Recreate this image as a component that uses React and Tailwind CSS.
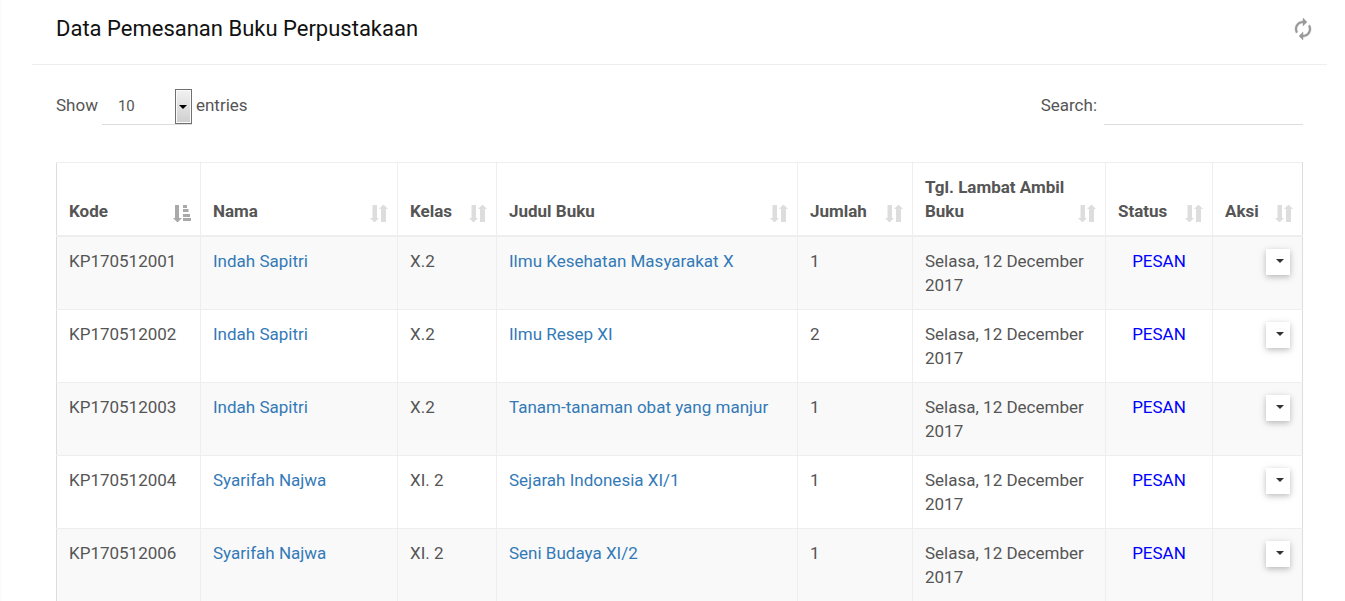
import { useState } from "react";

const columns = [
  { label: "Kode", width: "w-[144px]", sorted: true },
  { label: "Nama", width: "w-[197px]" },
  { label: "Kelas", width: "w-[99px]" },
  { label: "Judul Buku", width: "w-[301px]" },
  { label: "Jumlah", width: "w-[115px]" },
  { label: "Tgl. Lambat Ambil Buku", width: "w-[193px]" },
  { label: "Status", width: "w-[107px]" },
  { label: "Aksi", width: "w-[90px]" },
];

const date = "Selasa, 12 December 2017";
const rows = [
  ["KP170512001", "Indah Sapitri", "X.2", "Ilmu Kesehatan Masyarakat X", 1],
  ["KP170512002", "Indah Sapitri", "X.2", "Ilmu Resep XI", 2],
  ["KP170512003", "Indah Sapitri", "X.2", "Tanam-tanaman obat yang manjur", 1],
  ["KP170512004", "Syarifah Najwa", "XI. 2", "Sejarah Indonesia XI/1", 1],
  ["KP170512006", "Syarifah Najwa", "XI. 2", "Seni Budaya XI/2", 1],
];

function SortIcon({ sorted }) {
  return sorted ? (
    <svg viewBox="0 0 18 17" className="mb-px h-[17px] w-[18px] shrink-0 fill-[#a9a9a9]" aria-hidden="true">
      <path d="M2 0h4v13h3l-4 4h-1L0 13h2zM10 0h4v3h-4zM10 4h5.500v3H10zM10 9h7v3h-7zM10 13h8v3h-8z" />
    </svg>
  ) : (
    <svg viewBox="0 0 18 17" className="mb-px h-[17px] w-[18px] shrink-0 fill-[#dddddd]" aria-hidden="true">
      <path d="M2.500 0h4.500v13h2l-4 4h-1L0 13h2.500zM11 17V4H9l4-4h1l4 4h-2v13z" />
    </svg>
  );
}

function Caret({ className }) {
  return (
    <svg viewBox="0 0 8 4" className={"h-1 w-2 " + className} aria-hidden="true">
      <path d="M0 0h8L4 4z" />
    </svg>
  );
}

const cell =
  "border border-[#eeeeee] p-3 first:border-l-[#dddddd] last:border-r-[#dddddd]";

export default function App() {
  const [entries, setEntries] = useState("10");
  const [search, setSearch] = useState("");

  return (
    <main className="min-h-screen border-l-2 border-[#fcfcfc] bg-white pr-[18px] pl-[30px] font-[Roboto,sans-serif] text-[17px] leading-6 text-[#555555]">
      <header className="flex h-[65px] items-center justify-between border-b border-[#eeeeee] px-6 pb-[7px]">
        <h1 className="text-[22px] leading-6 text-[#111111]">Data Pemesanan Buku Perpustakaan</h1>
        <button type="button" aria-label="Refresh" className="-mr-3 text-[#999999]">
          <svg viewBox="0 0 24 24" className="size-6 fill-current stroke-current" strokeWidth="0.4" aria-hidden="true">
            <path d="M12 6v3l4-4-4-4v3c-4.420 0-8 3.580-8 8 0 1.570.460 3.030 1.240 4.260L6.700 14.800c-.450-.830-.700-1.790-.700-2.800 0-3.310 2.690-6 6-6zm6.760 1.740L17.300 9.200c.440.840.700 1.790.700 2.800 0 3.310-2.690 6-6 6v-3l-4 4 4 4v-3c4.420 0 8-3.580 8-8 0-1.570-.460-3.030-1.240-4.260z" />
          </svg>
        </button>
      </header>

      <section className="px-6 pt-6">
        <div className="mb-[37px] flex items-start justify-between">
          <div className="flex items-start gap-1">
            <label htmlFor="entries" className="pt-1">Show</label>
            <div className="grid h-9 w-[90px] border-b border-[#dddddd]">
              <select
                id="entries"
                value={entries}
                onChange={(e) => setEntries(e.target.value)}
                className="col-start-1 row-start-1 w-full appearance-none bg-transparent px-4 pb-[2px] text-[15px] outline-none"
              >
                <option>10</option>
                <option>25</option>
                <option>50</option>
                <option>100</option>
              </select>
              <span className="pointer-events-none col-start-1 row-start-1 flex w-[17px] items-center justify-center justify-self-end border border-[#707070] bg-linear-to-b from-[#f2f2f2] to-[#cfcfcf] shadow-[inset_0_0_0_1px_#fafafa]">
                <Caret className="fill-black" />
              </span>
            </div>
            <label htmlFor="entries" className="pt-1">entries</label>
          </div>
          <div className="flex items-start gap-[7px]">
            <label htmlFor="search" className="pt-1">Search:</label>
            <input
              id="search"
              type="search"
              value={search}
              onChange={(e) => setSearch(e.target.value)}
              className="h-9 w-[199px] appearance-none border-b border-[#dddddd] bg-transparent text-[15px] outline-none"
            />
          </div>
        </div>

        <table className="w-full table-fixed border-collapse text-left">
          <thead>
            <tr>
              {columns.map((c) => (
                <th key={c.label} scope="col" className={c.width + " border border-b-2 border-[#eeeeee] p-3 pr-[9px] align-bottom font-bold first:border-l-[#dddddd] last:border-r-[#dddddd]"}>
                  <div className="flex items-end justify-between">
                    <span>{c.label}</span>
                    <SortIcon sorted={c.sorted} />
                  </div>
                </th>
              ))}
            </tr>
          </thead>
          <tbody>
            {rows.map(([code, name, grade, title, count]) => (
              <tr key={code} className="align-top odd:bg-[#f9f9f9]">
                <td className={cell}>{code}</td>
                <td className={cell}>
                  <a href="#nama" className="text-[#337ab7]">{name}</a>
                </td>
                <td className={cell}>{grade}</td>
                <td className={cell}>
                  <a href="#buku" className="text-[#337ab7]">{title}</a>
                </td>
                <td className={cell}>{count}</td>
                <td className={cell}>{date}</td>
                <td className={cell + " text-center text-[#0000ff]"}>PESAN</td>
                <td className={cell}>
                  <button
                    type="button"
                    aria-label={"Aksi " + code}
                    className="ml-auto flex h-[26px] w-6 items-center justify-end bg-white pr-[6px] pb-[2px] shadow-[0_2px_5px_rgba(0,0,0,0.16),0_2px_10px_rgba(0,0,0,0.12)]"
                  >
                    <Caret className="fill-[#333333]" />
                  </button>
                </td>
              </tr>
            ))}
          </tbody>
        </table>
      </section>
    </main>
  );
}
